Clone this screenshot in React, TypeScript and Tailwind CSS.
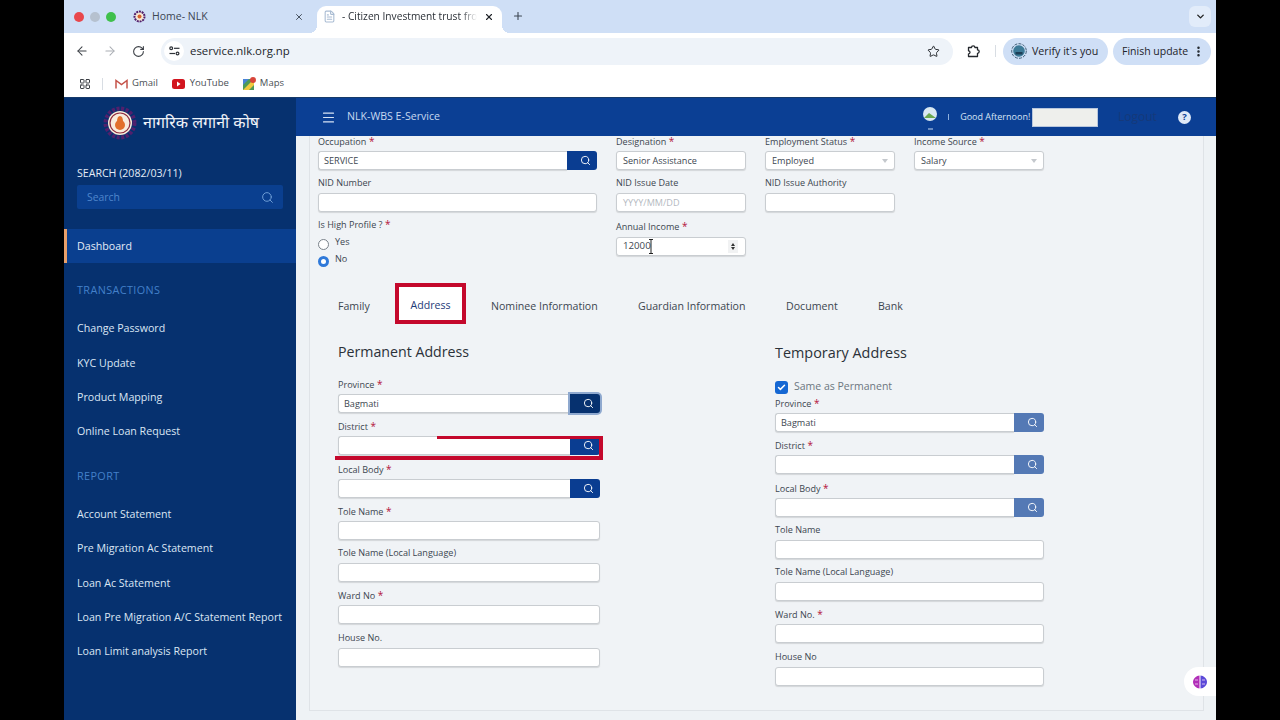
import React from "react";
import { ArrowLeft, ArrowRight, RotateCw, Star, ChevronDown, Search, X, Plus, Menu, MoreVertical, LayoutGrid, Check, FileText } from "lucide-react";

const font = "font-['Open_Sans',sans-serif]";

function Req() {
  return <span className="text-[#b3123a] text-[10px]"> *</span>;
}

function Label({ text, req }: { text: string; req?: boolean }) {
  return (
    <div className="h-[13px] leading-[12px] text-[9.05px] text-[#3c4650] whitespace-nowrap">
      {text}
      {req ? <Req /> : null}
    </div>
  );
}

function Box({ children, cls }: { children?: React.ReactNode; cls?: string }) {
  return (
    <div className={"h-[19px] bg-white border border-[#c9cdd1] rounded-[3px] shadow-[0_1px_1px_rgba(0,0,0,0.12)] flex items-center px-[6px] text-[9.1px] text-[#3c4650] " + (cls || "")}>
      {children}
    </div>
  );
}

function SearchBox({ value, btn }: { value?: string; btn?: string }) {
  return (
    <div className="h-[19px] flex">
      <div className="flex-1 bg-white border border-[#c9cdd1] border-r-0 rounded-l-[3px] shadow-[0_1px_1px_rgba(0,0,0,0.12)] flex items-center px-[5px] text-[9.1px] text-[#3c4650]">{value}</div>
      <div className={"w-[30px] rounded-r-[3px] flex items-center justify-center pl-[6px] " + (btn || "bg-[#0a3d91]")}>
        <Search size={11} color="#fff" strokeWidth={2} />
      </div>
    </div>
  );
}

function Field({ label, req, children, h }: { label: string; req?: boolean; children: React.ReactNode; h?: string }) {
  return (
    <div className={h || "h-[42.3px]"}>
      <Label text={label} req={req} />
      <div className="mt-[3px]">{children}</div>
    </div>
  );
}

function SideItem({ text }: { text: string }) {
  return <div className="h-[34.4px] flex items-center pl-[13px] text-[#dbe6f4] text-[10.65px] whitespace-nowrap">{text}</div>;
}

function SideHead({ text, cls }: { text: string; cls: string }) {
  return <div className={"pl-[13px] text-[#4380c9] text-[10.8px] tracking-[0.4px] h-[16px] leading-[16px] " + cls}>{text}</div>;
}

function Caret() {
  return <span className="ml-auto w-0 h-0 border-x-[3.5px] border-x-transparent border-t-[4px] border-t-[#c4c8cd]" />;
}

function Logo() {
  return (
    <svg width="34" height="34" viewBox="0 0 34 34" className="shrink-0">
      <circle cx="17" cy="17" r="14.500" fill="none" stroke="#51206d" strokeWidth="4" strokeDasharray="3 1.6" />
      <circle cx="17" cy="17" r="12" fill="#f8ecdc" />
      <circle cx="17" cy="17" r="10" fill="none" stroke="#8e2a3c" strokeWidth="1.200" />
      <ellipse cx="17" cy="19" rx="5" ry="5" fill="#e2702a" />
      <path d="M14 16c0-4 1-6 3-6s3 2 3 6z" fill="#e2702a" />
    </svg>
  );
}

function Brain() {
  return (
    <svg width="16" height="16" viewBox="0 0 16 16">
      <path d="M7.500 1.500C4.500 1.500 1 4.500 1 8s3.500 6.500 6.500 6.500z" fill="#b12fb8" />
      <path d="M8.500 1.500c3 0 6.500 3 6.500 6.500s-3.500 6.500-6.500 6.500z" fill="#5b49d8" />
      <path d="M3 6h3M3 10h3M10 6h3M10 10h3" stroke="#f3d9f5" strokeWidth=".8" />
    </svg>
  );
}

export default function App() {
  return (
    <div className={"w-[1280px] h-[720px] overflow-hidden bg-black flex justify-center " + font}>
      <div className="w-[1152px] h-full flex flex-col bg-white relative">
        {/* tab strip */}
        <div className="h-[33px] bg-[#cfdff6] flex items-end pl-[10px] relative shrink-0">
          <div className="flex gap-[6px] items-center h-full">
            <span className="w-[10px] h-[10px] rounded-full bg-[#e8474c]" />
            <span className="w-[10px] h-[10px] rounded-full bg-[#b6c1cf]" />
            <span className="w-[10px] h-[10px] rounded-full bg-[#3fc04c]" />
          </div>
          <div className="flex items-center h-full w-[201px] pl-[17px] pr-[13px]">
            <svg width="13" height="13" viewBox="0 0 13 13"><circle cx="6.500" cy="6.500" r="5" fill="#f6e9d6" stroke="#51206d" strokeWidth="2" strokeDasharray="2 .8" /><circle cx="6.500" cy="6.500" r="2" fill="#d9612a" /></svg>
            <span className="ml-[6px] text-[10.5px] text-[#3c4653]">Home- NLK</span>
            <X size={10} color="#3c4653" className="ml-auto" strokeWidth={2.2} />
          </div>
          <div className="relative h-[27px] w-[185px] bg-white rounded-t-[9px] flex items-center pl-[6px] pr-[8px] pb-[6px] self-end">
            <span className="absolute left-[-8px] bottom-0 w-[8px] h-[8px] bg-[radial-gradient(circle_at_0_0,transparent_8px,white_8px)]" />
            <span className="absolute right-[-8px] bottom-0 w-[8px] h-[8px] bg-[radial-gradient(circle_at_100%_0,transparent_8px,white_8px)]" />
            <FileText size={13} color="#a9bcd3" className="shrink-0" />
            <span className="ml-[6px] text-[10.2px] text-[#2a2f36] whitespace-nowrap [mask-image:linear-gradient(90deg,#000_88%,transparent)]">- Citizen Investment trust fro</span>
            <X size={10} color="#1f2328" className="ml-auto" strokeWidth={2.6} />
          </div>
          <Plus size={12} color="#3c4653" className="ml-[10px] mb-[11px]" strokeWidth={2.2} />
          <div className="ml-auto mr-[5px] mb-[6px] w-[22px] h-[21px] rounded-[6px] bg-[#e2ecfa] flex items-center justify-center">
            <ChevronDown size={11} color="#222" strokeWidth={3} />
          </div>
        </div>
        {/* toolbar */}
        <div className="h-[35px] pt-[1px] bg-white flex items-center pl-[11px] pr-[5px] shrink-0">
          <ArrowLeft size={14} color="#3c4046" strokeWidth={1.8} />
          <ArrowRight size={14} color="#a9adb3" strokeWidth={1.8} className="ml-[14px]" />
          <RotateCw size={13} color="#3c4046" strokeWidth={2} className="ml-[15px]" />
          <div className="ml-[16px] shrink-0 w-[792px] h-[27px] rounded-full bg-[#eef3f9] flex items-center pl-[3px] pr-[13px]">
            <div className="w-[20px] h-[20px] bg-white rounded-full flex items-center justify-center">
              <svg width="11" height="10" viewBox="0 0 11 10" fill="none" stroke="#2e3238" strokeWidth="1.200">
                <circle cx="2.200" cy="2.300" r="1.400" /><path d="M5 2.300h5.500" />
                <circle cx="8.500" cy="7.500" r="1.400" /><path d="M.5 7.500H6" />
              </svg>
            </div>
            <span className="ml-[6px] text-[11.4px] text-[#22262b]">eservice.nlk.org.np</span>
            <Star size={13} color="#24282d" strokeWidth={1.8} className="ml-auto" />
          </div>
          <svg width="14" height="14" viewBox="0 0 14 14" fill="none" stroke="#24282d" strokeWidth="1.300" className="ml-[14px] shrink-0">
            <path d="M1.500 3.500h3a1.700 1.700 0 0 1 3.400 0h2.600v2.400a1.700 1.700 0 0 1 0 3.400v3.200H1.500V9.800a1.500 1.500 0 0 0 0-3z" strokeLinejoin="round" />
          </svg>
          <div className="ml-[14px] w-px h-[12px] bg-[#d8dde3] shrink-0" />
          <div className="ml-[7px] h-[27px] w-[105px] shrink-0 rounded-full bg-[#cfdff6] flex items-center pl-[8px]">
            <svg width="16" height="16" viewBox="0 0 16 16" className="shrink-0">
              <circle cx="8" cy="8" r="7.300" fill="none" stroke="#1d3e57" strokeWidth=".8" strokeDasharray="3 1.200" />
              <circle cx="8" cy="8" r="5.800" fill="#3d7a97" />
              <rect x="4.500" y="9" width="7" height="2.500" fill="#1d3e57" />
            </svg>
            <span className="ml-[5px] text-[10.7px] text-[#1e2329] whitespace-nowrap">Verify it's you</span>
          </div>
          <div className="ml-[5px] h-[27px] w-[98px] shrink-0 rounded-full bg-[#cfdff6] flex items-center pl-[9px]">
            <span className="pt-[1px] text-[10.5px] text-[#1e2329] whitespace-nowrap">Finish update</span>
            <MoreVertical size={13} color="#1e2329" strokeWidth={2.6} className="ml-auto mr-[6px]" />
          </div>
        </div>
        {/* bookmarks */}
        <div className="h-[29px] pt-[2px] bg-white flex items-center pl-[15px] text-[9.5px] text-[#4a4f55] shrink-0">
          <LayoutGrid size={12} color="#3c4046" strokeWidth={2} />
          <div className="ml-[11px] w-px h-[12px] bg-[#d8dde3]" />
          <svg width="13" height="10" viewBox="0 0 13 10" className="ml-[12px]"><path d="M1 9.500V1.500l5.500 4 5.500-4v8" fill="none" stroke="#c5534a" strokeWidth="1.500" /></svg>
          <span className="ml-[4px]">Gmail</span>
          <svg width="13" height="10" viewBox="0 0 13 10" className="ml-[14px]"><rect width="13" height="10" rx="2.500" fill="#d2151f" /><path d="M5 2.500l3.500 2.500L5 7.500z" fill="#fff" /></svg>
          <span className="ml-[5px]">YouTube</span>
          <svg width="13" height="13" viewBox="0 0 13 13" className="ml-[14px]"><rect y="2" width="11" height="11" fill="#4f9a57" /><path d="M0 13L11 2v6l-5 5z" fill="#f2c93f" /><path d="M0 2h6L0 8z" fill="#4a83d8" /><circle cx="10" cy="3" r="3" fill="#d8453a" /></svg>
          <span className="ml-[4px]">Maps</span>
        </div>
        {/* app */}
        <div className="flex-1 flex min-h-0 border-t border-[#163a6a]">
          <aside className="w-[232px] shrink-0 bg-[#06316f] flex flex-col">
            <div className="h-[49px] flex items-center pl-[39px]">
              <Logo />
              <span className="ml-[6px] pt-[5px] text-[16px] text-[#eef2f7] whitespace-nowrap font-['Noto_Sans_Devanagari','Noto_Sans',sans-serif]">नागरिक लगानी कोष</span>
            </div>
            <div className="pl-[13px] mt-[19px] h-[14px] leading-[14px] text-[10.6px] text-[#e4ecf6]">SEARCH (2082/03/11)</div>
            <div className="ml-[13px] mt-[5px] w-[206px] h-[24px] bg-[#0a3f8f] rounded-[2px] flex items-center pl-[10px] pr-[9px] pt-[1px] text-[10.4px] text-[#4f86cc]">
              Search
              <Search size={13} color="#6f9ed6" strokeWidth={1.8} className="ml-auto" />
            </div>
            <div className="mt-[20px] h-[34px] pt-[1px] bg-[#0a3f8f] border-l-[3px] border-[#e8a06a] flex items-center pl-[10px] text-[10.65px] text-[#e4ecf6]">Dashboard</div>
            <SideHead text="TRANSACTIONS" cls="mt-[19px]" />
            <div className="mt-[14px]">
              <SideItem text="Change Password" />
              <SideItem text="KYC Update" />
              <SideItem text="Product Mapping" />
              <SideItem text="Online Loan Request" />
            </div>
            <SideHead text="REPORT" cls="mt-[18px]" />
            <div className="mt-[14px]">
              <SideItem text="Account Statement" />
              <SideItem text="Pre Migration Ac Statement" />
              <SideItem text="Loan Ac Statement" />
              <SideItem text="Loan Pre Migration A/C Statement Report" />
              <SideItem text="Loan Limit analysis Report" />
            </div>
          </aside>
          <div className="flex-1 min-w-0 flex flex-col">
            <header className="h-[38px] bg-[#0b3f94] flex items-center pl-[25px] shrink-0 relative z-10">
              <Menu size={15} color="#d7e4f5" strokeWidth={1.8} />
              <span className="ml-[11px] text-[10.6px] text-[#c7d9f0] whitespace-nowrap">NLK-WBS E-Service</span>
              <div className="ml-auto flex items-center">
                <svg width="16" height="26" viewBox="0 0 16 26"><circle cx="8" cy="10" r="7" fill="#d9e8f2" /><path d="M2 14l5-5 7 5z" fill="#6aa84f" /><path d="M6 25h5" stroke="#c7d9f0" /></svg>
                <span className="ml-[10px] w-px h-[6px] bg-[#8fb0db]" />
                <span className="ml-[11px] text-[9px] text-[#d7e4f5] whitespace-nowrap">Good Afternoon! !</span>
                <span className="w-[66px] h-[19px] bg-[#eeefec] border border-[#b8c6dc] ml-[-3px]" />
                <span className="ml-[20px] w-[39px] text-[12px] text-[#15397a] whitespace-nowrap">Logout</span>
                <span className="ml-[21px] mr-[25px] w-[13px] h-[13px] rounded-full bg-[#dfe9f7] flex items-center justify-center text-[9.5px] font-bold text-[#0b3f94]">?</span>
              </div>
            </header>
            <main className="flex-1 bg-[#eef2f5] pl-[13px] pr-[12px] pb-[8px] relative min-h-0">
              <div className="h-full bg-[#f0f3f6] border-l border-r border-b border-[#dfe3e7] relative">
                <div className="pl-[8px]">
                  {/* top form */}
                  <div className="grid grid-cols-[279px_130px_130px_130px] gap-x-[19px] -mt-[1px]">
                    <Field label="Occupation" req h="h-[42px]"><SearchBox value="SERVICE" /></Field>
                    <Field label="Designation" req h="h-[42px]"><Box>Senior Assistance</Box></Field>
                    <Field label="Employment Status" req h="h-[42px]"><Box>Employed<Caret /></Box></Field>
                    <Field label="Income Source" req h="h-[42px]"><Box>Salary<Caret /></Box></Field>
                    <Field label="NID Number" h="h-[41px]"><Box /></Field>
                    <Field label="NID Issue Date" h="h-[41px]"><Box><span className="text-[#b4b9bf]">YYYY/MM/DD</span></Box></Field>
                    <Field label="NID Issue Authority" h="h-[41px]"><Box /></Field>
                    <div />
                    <div>
                      <Label text="Is High Profile ?" req />
                      <div className="mt-[3px] flex items-center h-[17px] text-[9.1px] text-[#3c4650]">
                        <span className="w-[11px] h-[11px] rounded-full bg-white border border-[#7a828a] mt-[4px]" />
                        <span className="ml-[6px] mb-[2px]">Yes</span>
                      </div>
                      <div className="flex items-center h-[17px] text-[9.1px] text-[#3c4650]">
                        <span className="w-[11px] h-[11px] rounded-full bg-white border-[3px] border-[#2f79d9] mt-[4px]" />
                        <span className="ml-[6px] mb-[2px]">No</span>
                      </div>
                    </div>
                    <div className="pt-[2px]">
                      <Label text="Annual Income" req />
                      <Box cls="mt-[4px]">
                        <span className="text-[9.7px]">12000</span>
                        <svg width="6" height="15" viewBox="0 0 6 15" className="ml-[-3px] shrink-0" fill="none" stroke="#222" strokeWidth="1">
                          <path d="M1 .5h4M3 .5v14M1 14.500h4" />
                        </svg>
                        <span className="ml-auto mr-[1px] px-[3px] h-[13px] bg-[#f1f2f3] flex flex-col gap-[1px] justify-center">
                          <span className="w-0 h-0 border-x-[2.5px] border-x-transparent border-b-[3px] border-b-[#333]" />
                          <span className="w-0 h-0 border-x-[2.5px] border-x-transparent border-t-[3px] border-t-[#333]" />
                        </span>
                      </Box>
                    </div>
                  </div>
                </div>
                {/* tabs */}
                <div className="mt-[15px] flex items-center h-[41px] pl-[28px] text-[10.6px] text-[#3c4650] whitespace-nowrap">
                  <span className="w-[57px] pt-[7px]">Family</span>
                  <div className="relative w-[71px] h-[41px] pt-[5px] bg-white border-[4px] border-[#c4082c] flex items-center justify-center text-[#1d3a78]">Address</div>
                  <span className="ml-[25px] w-[147px] pt-[7px]">Nominee Information</span>
                  <span className="w-[148px] pt-[7px]">Guardian Information</span>
                  <span className="w-[92px] pt-[7px]">Document</span>
                  <span className="pt-[7px]">Bank</span>
                </div>
                {/* addresses */}
                <div className="flex pl-[28px] mt-[18px]">
                  <div className="w-[262px]">
                    <div className="h-[20px] leading-[20px] text-[14.2px] text-[#2b3138] whitespace-nowrap">Permanent Address</div>
                    <div className="mt-[16px]">
                      <Field label="Province" req><SearchBox value="Bagmati" btn="bg-[#06316f] ring-2 ring-[#8fa9cf]" /></Field>
                      <div className="relative">
                        <Field label="District" req><SearchBox /></Field>
                        <div className="absolute left-[99px] right-[-3px] top-[16px] h-[3px] bg-[#c4082c]" />
                        <div className="absolute right-[-3px] top-[16px] w-[4px] h-[24px] bg-[#c4082c]" />
                        <div className="absolute left-[-3px] right-[-3px] top-[36px] h-[4px] bg-[#c4082c]" />
                      </div>
                      <Field label="Local Body" req><SearchBox /></Field>
                      <Field label="Tole Name" req><Box /></Field>
                      <Field label="Tole Name (Local Language)"><Box /></Field>
                      <Field label="Ward No" req><Box /></Field>
                      <Field label="House No."><Box /></Field>
                    </div>
                  </div>
                  <div className="ml-[175px] w-[269px]">
                    <div className="mt-[1px] h-[20px] leading-[20px] text-[14.4px] text-[#2b3138] whitespace-nowrap">Temporary Address</div>
                    <div className="mt-[17px] h-[14px] flex items-center">
                      <span className="w-[13px] h-[13px] rounded-[3px] bg-[#1567d3] flex items-center justify-center"><Check size={9} color="#fff" strokeWidth={4} /></span>
                      <span className="ml-[6px] text-[10.5px] text-[#6c7680]">Same as Permanent</span>
                    </div>
                    <div className="mt-[3px]">
                      <Field label="Province" req><SearchBox value="Bagmati" btn="bg-[#5479b5]" /></Field>
                      <Field label="District" req><SearchBox btn="bg-[#5479b5]" /></Field>
                      <Field label="Local Body" req><SearchBox btn="bg-[#5479b5]" /></Field>
                      <Field label="Tole Name"><Box /></Field>
                      <Field label="Tole Name (Local Language)"><Box /></Field>
                      <Field label="Ward No." req><Box /></Field>
                      <Field label="House No"><Box /></Field>
                    </div>
                  </div>
                </div>
              </div>
              <div className="absolute right-0 top-[531px] w-[32px] h-[29px] bg-white rounded-l-full flex items-center pl-[8px]">
                <Brain />
              </div>
            </main>
          </div>
        </div>
      </div>
    </div>
  );
}
